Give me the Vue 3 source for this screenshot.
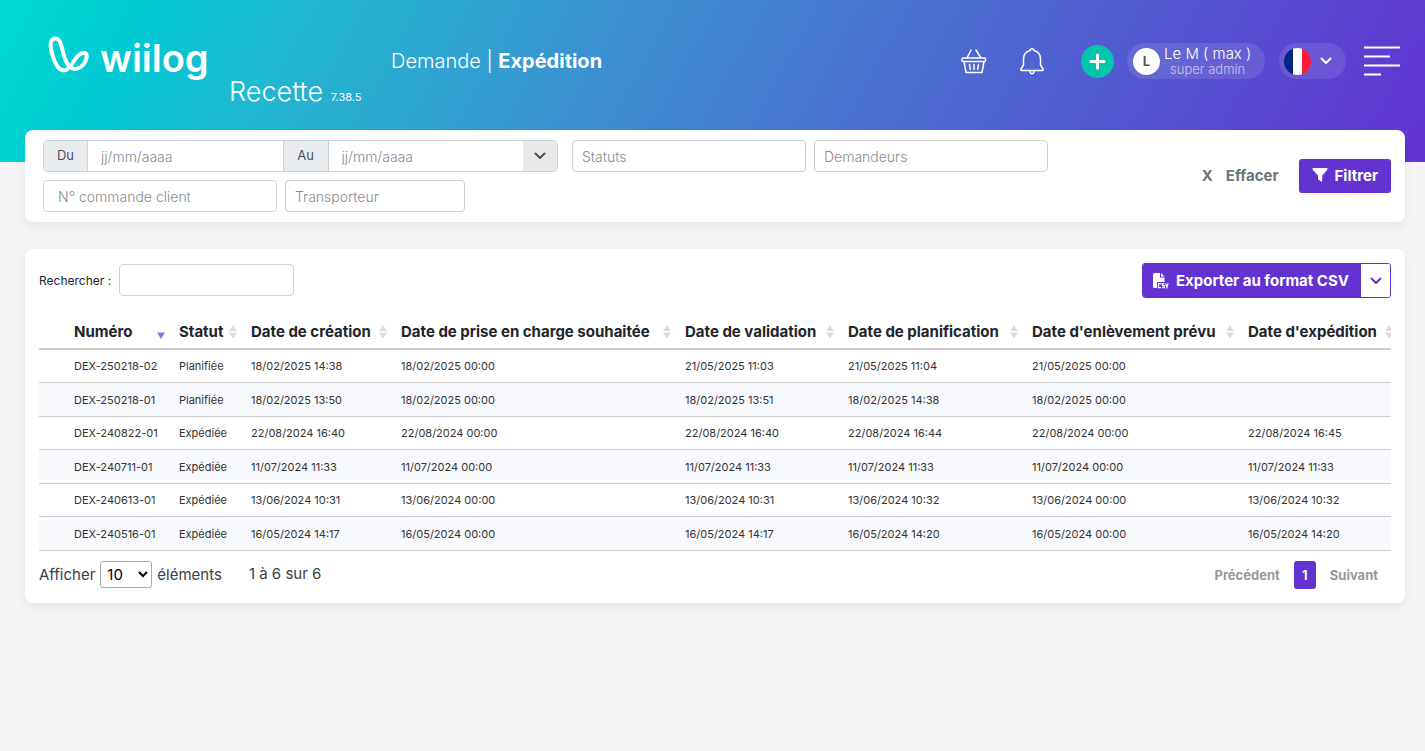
<script setup>
import { ref } from 'vue'

const columns = [
  { key: 'numero', label: 'Numéro', active: true },
  { key: 'statut', label: 'Statut' },
  { key: 'creation', label: 'Date de création' },
  { key: 'charge', label: 'Date de prise en charge souhaitée' },
  { key: 'validation', label: 'Date de validation' },
  { key: 'planification', label: 'Date de planification' },
  { key: 'enlevement', label: "Date d'enlèvement prévu" },
  { key: 'expedition', label: "Date d'expédition" }
]

const rows = [
  ['DEX-250218-02', 'Planifiée', '18/02/2025 14:38', '18/02/2025 00:00', '21/05/2025 11:03', '21/05/2025 11:04', '21/05/2025 00:00', ''],
  ['DEX-250218-01', 'Planifiée', '18/02/2025 13:50', '18/02/2025 00:00', '18/02/2025 13:51', '18/02/2025 14:38', '18/02/2025 00:00', ''],
  ['DEX-240822-01', 'Expédiée', '22/08/2024 16:40', '22/08/2024 00:00', '22/08/2024 16:40', '22/08/2024 16:44', '22/08/2024 00:00', '22/08/2024 16:45'],
  ['DEX-240711-01', 'Expédiée', '11/07/2024 11:33', '11/07/2024 00:00', '11/07/2024 11:33', '11/07/2024 11:33', '11/07/2024 00:00', '11/07/2024 11:33'],
  ['DEX-240613-01', 'Expédiée', '13/06/2024 10:31', '13/06/2024 00:00', '13/06/2024 10:31', '13/06/2024 10:32', '13/06/2024 00:00', '13/06/2024 10:32'],
  ['DEX-240516-01', 'Expédiée', '16/05/2024 14:17', '16/05/2024 00:00', '16/05/2024 14:17', '16/05/2024 14:20', '16/05/2024 00:00', '16/05/2024 14:20']
]

const search = ref('')
const pageSize = ref('10')
</script>

<template>
  <div class="page">
    <header class="banner">
      <div class="bar">
        <div class="brand">
          <a href="#" class="logo" aria-label="wiilog">
            <svg width="41" height="38" viewBox="0 0 41 38" fill="none" stroke="#fff" stroke-width="4" stroke-linejoin="round">
              <path d="M7.500 2.500C3 2.500 2 7 3 13C5 23 9 34 16 34.500C20 34.500 23 30 26 25C29 20 33 16.500 36.500 17C40.500 18 38.500 25 35 29C31 33.500 26 34 22 31C16 26 16 17 13 9C12 4.500 10.500 2.500 7.500 2.500Z" />
            </svg>
            <span class="wordmark">wiilog</span>
          </a>
          <div class="instance">Recette <small>7.38.5</small></div>
        </div>
        <h1 class="title">Demande | <b>Expédition</b></h1>
        <div class="tools">
          <button class="bare basket" aria-label="Panier">
            <svg width="26" height="26" viewBox="0 0 26 26" fill="none" stroke="#fff" stroke-width="1.500" stroke-linecap="round" stroke-linejoin="round">
              <path d="M10 2L6 10M15 2L20 10" />
              <rect x="1" y="10" width="23.500" height="3.500" rx="1" />
              <path d="M3 13.500L5 24.500H21L23 13.500M8.500 16.500L9.300 21.500M13 16.500V21.500M17.500 16.500L16.700 21.500" />
            </svg>
          </button>
          <button class="bare bell" aria-label="Notifications">
            <svg width="24" height="28" viewBox="0 0 24 28" fill="none" stroke="#fff" stroke-width="1.500" stroke-linecap="round" stroke-linejoin="round">
              <path d="M10 3.500C10 1 14 1 14 3.500C18.500 4.800 20.500 8 20.500 12V18L23 22V23.500H1V22L3.500 18V12C3.500 8 5.500 4.800 10 3.500Z" />
              <path d="M10 24C10 27.500 14 27.500 14 24" />
            </svg>
          </button>
          <button class="add" aria-label="Ajouter">
            <svg width="17" height="17" viewBox="0 0 17 17" stroke="#fff" stroke-width="3" stroke-linecap="round">
              <path d="M8.500 2V15M2 8.500H15" />
            </svg>
          </button>
          <button class="pill user">
            <span class="avatar">L</span>
            <span class="who"><span class="name">Le M ( max )</span><span class="role">super admin</span></span>
          </button>
          <button class="pill lang" aria-label="Langue : français">
            <span class="flag"></span>
            <svg width="12" height="8" viewBox="0 0 12 8" fill="none" stroke="#fff" stroke-width="2" stroke-linecap="round" stroke-linejoin="round"><path d="M1.500 1.500L6 6L10.500 1.500" /></svg>
          </button>
          <button class="bare menu" aria-label="Menu">
            <svg width="36" height="30" viewBox="0 0 36 30" stroke="#fff" stroke-width="2"><path d="M0 1.500H36M0 10.500H26M0 19.500H36M0 28.500H17" /></svg>
          </button>
        </div>
      </div>
    </header>

    <main class="content">
      <form class="card filters" @submit.prevent>
        <div class="fields">
          <div class="range">
            <label for="from">Du</label>
            <input id="from" type="text" placeholder="jj/mm/aaaa" />
            <label for="to">Au</label>
            <input id="to" type="text" placeholder="jj/mm/aaaa" />
            <button type="button" aria-label="Choisir une période">
              <svg width="12" height="8" viewBox="0 0 12 8" fill="none" stroke="#495057" stroke-width="2" stroke-linecap="round" stroke-linejoin="round"><path d="M1.500 1.500L6 6L10.500 1.500" /></svg>
            </button>
          </div>
          <input class="field pick" type="text" placeholder="Statuts" aria-label="Statuts" />
          <input class="field pick" type="text" placeholder="Demandeurs" aria-label="Demandeurs" />
          <input class="field order" type="text" placeholder="N° commande client" aria-label="N° commande client" />
          <input class="field pick carrier" type="text" placeholder="Transporteur" aria-label="Transporteur" />
        </div>
        <div class="actions">
          <button type="reset" class="clear"><span>X</span>Effacer</button>
          <button type="submit" class="primary">
            <svg width="16" height="14" viewBox="0 0 16 14" fill="#fff"><path d="M1 0H15Q16 .8 15.300 1.700L10.200 7.500V13.500H9L6 11.300V7.500L.7 1.700Q0 .8 1 0Z" /></svg>
            Filtrer
          </button>
        </div>
      </form>

      <section class="card listing">
        <div class="toolbar">
          <label class="search">Rechercher : <input v-model="search" type="search" /></label>
          <div class="export">
            <button class="export-main">
              <svg width="16" height="16" viewBox="0 0 16 16" fill="#fff">
                <path d="M1.500 0H7V4.500H11.500V9H4V15H1.500Q0 15 0 13.500V1.500Q0 0 1.500 0Z" />
                <path d="M8 0L11.500 3.500H8Z" />
                <path d="M8 10.700H5.500V14.700H8M11.300 10.700H9.300V12.700H11.300V14.700H9.200M12.700 10.300L13.900 14.500L15.100 10.300" fill="none" stroke="#fff" stroke-width="1.200" />
              </svg>
              Exporter au format CSV
            </button>
            <button class="export-more" aria-label="Autres exports">
              <svg width="12" height="8" viewBox="0 0 12 8" fill="none" stroke="#6233d0" stroke-width="2" stroke-linecap="round" stroke-linejoin="round"><path d="M1.500 1.500L6 6L10.500 1.500" /></svg>
            </button>
          </div>
        </div>

        <div class="scroller">
          <table>
            <colgroup>
              <col class="c-blank" />
              <col v-for="c in columns" :key="c.key" :class="'c-' + c.key" />
            </colgroup>
            <thead>
              <tr>
                <th></th>
                <th v-for="c in columns" :key="c.key">
                  <div class="head">
                    <span>{{ c.label }}</span>
                    <svg v-if="c.active" width="8" height="14" viewBox="0 0 8 14" fill="#7681e4"><path d="M0 7.500H8L4 14Z" /></svg>
                    <svg v-else width="8" height="14" viewBox="0 0 8 14" fill="#dcdcdc"><path d="M4 0L8 6H0ZM0 7.500H8L4 13.500Z" /></svg>
                  </div>
                </th>
              </tr>
            </thead>
            <tbody>
              <tr v-for="row in rows" :key="row[0]">
                <td></td>
                <td v-for="(cell, i) in row" :key="i">{{ cell }}</td>
              </tr>
            </tbody>
          </table>
        </div>

        <footer class="foot">
          <label class="size">Afficher
            <select v-model="pageSize">
              <option>10</option>
              <option>25</option>
              <option>50</option>
            </select>
            éléments
          </label>
          <span class="info">1 à 6 sur 6</span>
          <nav class="pager" aria-label="Pagination">
            <a href="#">Précédent</a>
            <a href="#" class="current">1</a>
            <a href="#">Suivant</a>
          </nav>
        </footer>
      </section>
    </main>
  </div>
</template>

<style>
body {
  background: #f4f4f7;
}
</style>

<style scoped>
.page,
.page * {
  box-sizing: border-box;
}
.page {
  min-height: 100vh;
  font-family: Inter, "Open Sans", sans-serif;
  font-size: 15px;
  color: #212529;
}
button,
input,
select {
  font-family: inherit;
  margin: 0;
}
button {
  display: flex;
  align-items: center;
  border: 0;
  padding: 0;
  background: none;
  cursor: pointer;
}
svg {
  display: block;
  flex: none;
}
a {
  color: inherit;
  text-decoration: none;
}

.banner {
  height: 162px;
  background: linear-gradient(118deg, #00dcd2, #00c9d2 10%, #1fb9d2 20%, #3c90d1 42%, #6233d0);
  color: #fff;
}
.bar {
  display: flex;
  align-items: center;
  height: 122px;
  padding: 0 25px 0 48px;
}
.brand {
  display: flex;
  align-self: stretch;
  min-width: 343px;
}
.logo {
  display: flex;
  align-items: flex-start;
  gap: 11px;
  width: 181px;
  padding-top: 36px;
}
.wordmark {
  font-size: 38px;
  line-height: 44px;
  font-weight: 600;
}
.instance {
  align-self: flex-end;
  padding-bottom: 9px;
  font-size: 27px;
  line-height: 32px;
  font-weight: 300;
}
.instance small {
  font-size: 11px;
  font-weight: 400;
}
.title {
  margin: 0;
  font-size: 20px;
  font-weight: 300;
}
.title b {
  font-weight: 700;
}
.tools {
  display: flex;
  align-items: center;
  margin-left: auto;
}
.bell {
  margin-left: 33px;
}
.add {
  justify-content: center;
  width: 33px;
  height: 33px;
  margin: 0 13px 0 37px;
  border-radius: 50%;
  background: #00c6ac;
}
.pill {
  height: 36px;
  border-radius: 18px;
  background: rgba(255, 255, 255, 0.1);
  color: #fff;
}
.user {
  width: 138px;
  gap: 4px;
  padding-left: 6px;
}
.avatar {
  flex: none;
  width: 27px;
  height: 27px;
  border-radius: 50%;
  background: #fff;
  color: #555;
  font-size: 13px;
  line-height: 27px;
  font-weight: 700;
}
.who {
  display: flex;
  flex-direction: column;
  align-items: center;
  white-space: nowrap;
}
.name {
  font-size: 15px;
  line-height: 16px;
  font-weight: 300;
}
.role {
  font-size: 13px;
  line-height: 14px;
  font-weight: 300;
  color: rgba(255, 255, 255, 0.65);
}
.lang {
  gap: 9px;
  width: 67px;
  margin: 0 18px 0 14px;
  padding-left: 5px;
}
.flag {
  width: 27px;
  height: 27px;
  border-radius: 50%;
  background: linear-gradient(90deg, #00267f 33%, #fff 33% 67%, #ff1a3c 67%);
}

.content {
  display: flex;
  flex-direction: column;
  gap: 27px;
  margin-top: -32px;
  padding: 0 20px 0 25px;
}
.card {
  border-radius: 8px;
  background: #fff;
  box-shadow: 0 4px 10px rgba(0, 0, 0, 0.06);
}
.filters {
  display: flex;
  align-items: center;
  justify-content: space-between;
  padding: 10px 14px 10px 18px;
}
.fields {
  display: flex;
  flex-wrap: wrap;
  gap: 8px;
  max-width: 1040px;
}
.range {
  display: flex;
  width: 515px;
  height: 32px;
  margin-right: 6px;
  border: 1px solid #ced4da;
  border-radius: 4px;
  overflow: hidden;
}
.range label {
  flex: none;
  width: 44px;
  border-right: 1px solid #ced4da;
  background: #e9ecef;
  color: #495057;
  font-size: 13px;
  line-height: 29px;
  text-align: center;
}
.range input {
  flex: 1;
  min-width: 0;
  padding: 0 13px;
  border: 0;
  font-size: 14px;
}
.range input + label {
  width: 46px;
  border-left: 1px solid #ced4da;
}
.range button {
  width: 34px;
  justify-content: center;
  background: #e9e9e9;
}
.field {
  width: 234px;
  height: 32px;
  padding: 0 9px;
  border: 1px solid #ced4da;
  border-radius: 4px;
  font-size: 14px;
}
.pick {
  border-color: #ccc;
}
.order {
  padding: 0 14px;
}
.carrier {
  width: 180px;
}
input::placeholder {
  color: #868c92;
  font-weight: 300;
  opacity: 1;
}
.actions {
  display: flex;
  align-items: center;
  gap: 20px;
}
.clear {
  gap: 13px;
  height: 34px;
  padding-bottom: 2px;
  color: #6c757d;
  font-size: 15px;
  font-weight: 700;
}
.primary {
  gap: 7px;
  height: 34px;
  padding: 0 13px 2px;
  border-radius: 3px;
  background: #6233d0;
  color: #fff;
  font-size: 15px;
  font-weight: 700;
}

.listing {
  padding: 14px;
}
.toolbar {
  display: flex;
  align-items: flex-start;
  justify-content: space-between;
}
.search {
  display: flex;
  align-items: center;
  gap: 8px;
  padding-top: 1px;
  font-size: 12px;
}
.search input {
  width: 175px;
  height: 32px;
  padding: 0 8px;
  border: 1px solid #ced4da;
  border-radius: 4px;
  font-size: 14px;
}
.export {
  display: flex;
  height: 35px;
  border: 1px solid #6233d0;
  border-radius: 3px;
  overflow: hidden;
}
.export-main {
  gap: 7px;
  padding: 0 12px 0 10px;
  background: #6233d0;
  color: #fff;
  font-size: 15px;
  font-weight: 700;
}
.export-more {
  width: 29px;
  justify-content: center;
  background: #fff;
}

.scroller {
  margin-top: 17px;
  overflow: hidden;
}
table {
  width: 100%;
  min-width: 1358px;
  table-layout: fixed;
  border-collapse: separate;
  border-spacing: 0;
}
.c-blank { width: 25px; }
.c-numero { width: 105px; }
.c-statut { width: 72px; }
.c-creation { width: 150px; }
.c-charge { width: 284px; }
.c-validation { width: 163px; }
.c-planification { width: 184px; }
.c-enlevement { width: 216px; }
.c-expedition { width: 159px; }
th {
  height: 35px;
  padding: 0 4px 0 10px;
  border-bottom: 2px solid #ccc;
  font-size: 15px;
  font-weight: 700;
  text-align: left;
  white-space: nowrap;
}
.head {
  display: flex;
  align-items: center;
  justify-content: space-between;
}
td {
  height: 33px;
  padding: 0 0 0 10px;
  border-bottom: 1px solid #ccc;
  font-size: 11px;
  color: #333;
  white-space: nowrap;
}
tbody tr:nth-child(even) td {
  height: 34px;
  background: #f8f9fc;
}

.foot {
  display: flex;
  align-items: flex-start;
  margin-top: 10px;
  color: #3c4045;
}
.size {
  display: flex;
  align-items: center;
  gap: 5px;
}
.size select {
  width: 52px;
  height: 27px;
  padding: 0 0 0 2px;
  border: 1px solid #aaa;
  border-radius: 3px;
  background: #fff;
  font-size: 15px;
}
.info {
  margin-left: 27px;
  line-height: 26px;
}
.pager {
  display: flex;
  align-items: center;
  gap: 14px;
  margin-left: auto;
  padding-right: 13px;
  color: #999;
  font-size: 13px;
  font-weight: 700;
}
.pager .current {
  width: 22px;
  height: 28px;
  border-radius: 3px;
  background: #6233d0;
  color: #fff;
  line-height: 28px;
  text-align: center;
}
</style>
